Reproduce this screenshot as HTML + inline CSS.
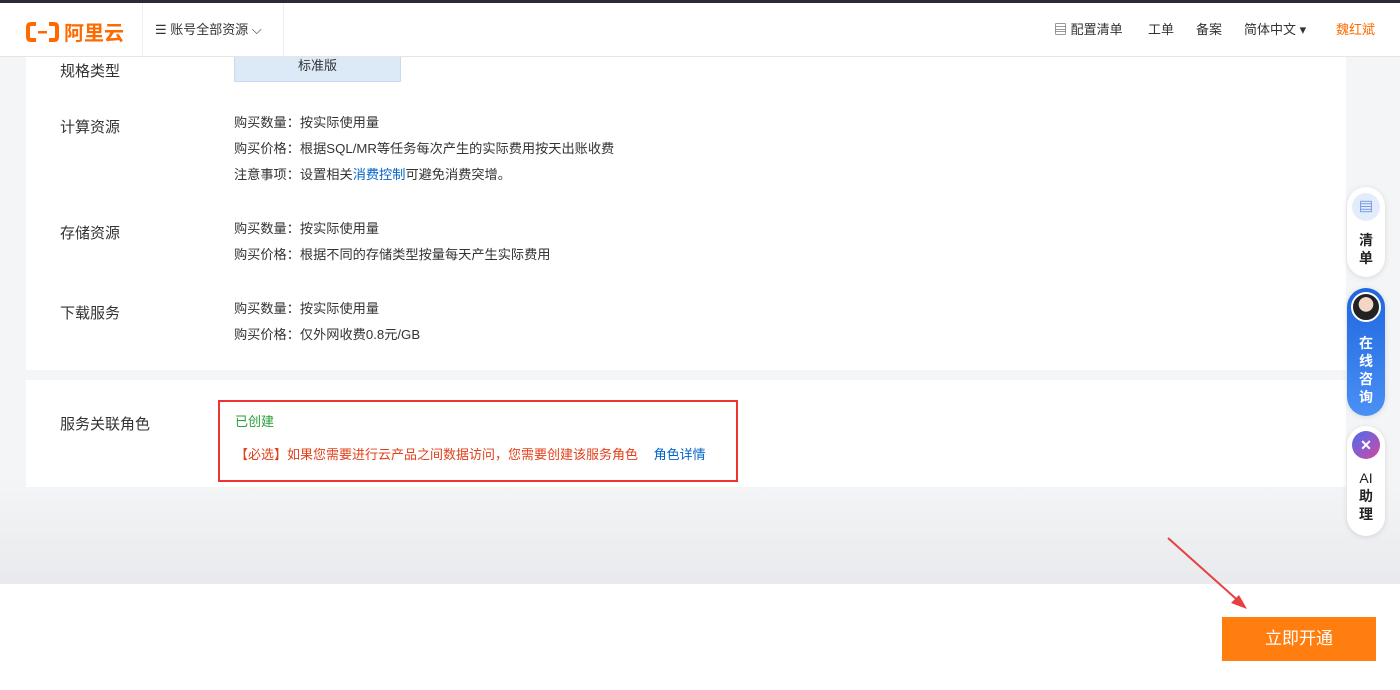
<!DOCTYPE html>
<html><head><meta charset="utf-8"><style>
*{margin:0;padding:0;box-sizing:border-box}
body{width:1400px;height:690px;overflow:hidden;font-family:"Liberation Sans","Noto Sans CJK SC",sans-serif;background:#f2f3f5;position:relative;color:#333}
.top{position:absolute;left:0;top:0;width:1400px;height:3px;background:#2b2b35}
.hdr{position:absolute;left:0;top:3px;width:1400px;height:54px;background:#fff;border-bottom:1px solid #e5e5e5}
.logo{position:absolute;left:26px;top:14px;color:#ff6a00;font-size:20px;font-weight:bold;display:flex;align-items:center;gap:5px}
.sep{position:absolute;top:0;width:1px;height:54px;background:#eee}
.acct{position:absolute;left:155px;top:16px;font-size:13px;color:#333}
.nav{position:absolute;top:16px;font-size:13px;color:#333}
.main{position:absolute;left:0;top:57px;width:1400px;height:527px;background:linear-gradient(#f4f5f7,#f4f5f7 80%,#e9eaed)}
.card{position:absolute;left:26px;width:1320px;background:#fff}
.lbl{position:absolute;left:34px;font-size:15px;color:#333}
.txt{position:absolute;left:208px;font-size:13.2px;color:#333;line-height:26px}
.foot{position:absolute;left:0;top:584px;width:1400px;height:106px;background:#fff}
.btn{position:absolute;left:1222px;top:617px;width:154px;height:44px;background:#ff7e0f;color:#fff;font-size:17px;text-align:center;line-height:44px}
.side{position:absolute;left:1347px;width:38px;border-radius:19px;background:#fff;box-shadow:0 1px 6px rgba(0,0,0,.12);text-align:center;font-size:14px;font-weight:bold;color:#222;line-height:18px}
</style></head><body>
<div class="top"></div>
<div class="hdr">
 <div class="logo"><svg width="33" height="20" viewBox="0 0 33 20"><path d="M10 2H5Q2 2 2 5V15Q2 18 5 18H10M23 2H28Q31 2 31 5V15Q31 18 28 18H23" fill="none" stroke="#ff6a00" stroke-width="4"/><rect x="12" y="9" width="9" height="2.5" fill="#ff6a00"/></svg><span>阿里云</span></div>
 <div class="sep" style="left:142px"></div><div class="sep" style="left:283px"></div>
 <div class="acct">☰ 账号全部资源 ⌵</div>
 <div class="nav" style="left:1054px">▤ 配置清单</div>
 <div class="nav" style="left:1148px">工单</div>
 <div class="nav" style="left:1196px">备案</div>
 <div class="nav" style="left:1244px">简体中文 ▾</div>
 <div class="nav" style="left:1336px;color:#ff6a00">魏红斌</div>
</div>
<div class="main">
 <div class="card" style="top:0;height:313px">
  <div style="position:absolute;left:208px;top:0;width:167px;height:25px;background:#dce9f6;border:1px solid #c9dcef;border-top:none;font-size:13px;text-align:center;line-height:18px">标准版</div>
  <div class="lbl" style="top:3px">规格类型</div>
  <div class="lbl" style="top:59px">计算资源</div>
  <div class="txt" style="top:53px">购买数量：按实际使用量<br>购买价格：根据SQL/MR等任务每次产生的实际费用按天出账收费<br>注意事项：设置相关<span style="color:#0064c8">消费控制</span>可避免消费突增。</div>
  <div class="lbl" style="top:165px">存储资源</div>
  <div class="txt" style="top:159px">购买数量：按实际使用量<br>购买价格：根据不同的存储类型按量每天产生实际费用</div>
  <div class="lbl" style="top:245px">下载服务</div>
  <div class="txt" style="top:239px">购买数量：按实际使用量<br>购买价格：仅外网收费0.8元/GB</div>
 </div>
 <div class="card" style="top:323px;height:107px">
  <div class="lbl" style="top:33px">服务关联角色</div>
  <div style="position:absolute;left:192px;top:20px;width:520px;height:82px;border:2px solid #e33"></div>
  <div style="position:absolute;left:209px;top:31px;font-size:13px;color:#2a9d3a">已创建</div>
  <div style="position:absolute;left:209px;top:64px;font-size:13px;color:#e2401b">【必选】如果您需要进行云产品之间数据访问，您需要创建该服务角色 <span style="color:#0064c8;margin-left:12px">角色详情</span></div>
 </div>
</div>
<div class="side" style="top:187px;height:90px;padding-top:6px"><div style="width:28px;height:28px;border-radius:14px;background:#e3ecfb;margin:0 auto 10px;color:#3a6fd8;line-height:28px;font-size:14px">▤</div>清<br>单</div>
<div class="side" style="top:288px;height:128px;background:linear-gradient(#1e66e0,#4a90f5);color:#fff;padding-top:4px"><div style="width:30px;height:30px;border-radius:15px;margin:0 auto 12px;border:2px solid #fff;background:radial-gradient(circle at 50% 40%,#f3d6c6 35%,#222 37%)"></div>在<br>线<br>咨<br>询</div>
<div class="side" style="top:426px;height:110px;padding-top:5px"><div style="width:28px;height:28px;border-radius:14px;background:linear-gradient(135deg,#4b6cf0,#d04aa0);margin:0 auto 10px;color:#fff;line-height:28px">✕</div><span style="font-weight:normal">AI</span><br>助<br>理</div>
<div class="foot"></div>
<svg style="position:absolute;left:1165px;top:535px" width="90" height="80"><line x1="3" y1="3" x2="78" y2="70" stroke="#e84040" stroke-width="2"/><path d="M82 74L66 68L74 60Z" fill="#e84040"/></svg>
<div class="btn">立即开通</div>
</body></html>
